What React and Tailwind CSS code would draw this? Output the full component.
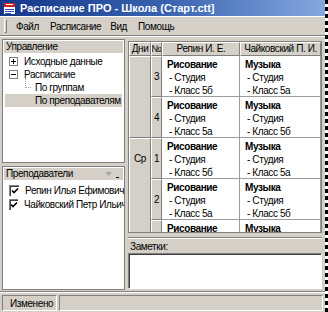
import React from 'react';

const rows = [
  { n: 3, a: 'Класс 5б', b: 'Класс 5а' },
  { n: 4, a: 'Класс 5а', b: 'Класс 5б' },
  { n: 1, a: 'Класс 5б', b: 'Класс 5а' },
  { n: 2, a: 'Класс 5а', b: 'Класс 5б' },
  { n: 3, a: 'Класс 5б', b: 'Класс 5а' },
];

function Lesson({ title, room, cls }) {
  return (
    <div className="pl-[5px] pt-[2px] leading-[13px]">
      <div className="font-bold">{title}</div>
      <div className="pl-[2px]">- {room}</div>
      <div className="pl-[2px]">- {cls}</div>
    </div>
  );
}

function Check() {
  return (
    <div className="w-[11px] h-[11px] bg-white border-t border-l border-[#808080] border-r-white border-b-white shadow-[inset_1px_1px_0_#404040] flex items-center justify-center">
      <svg width="8" height="8" viewBox="0 0 8 8">
        <path d="M1 3.5 L3 5.5 L7 1.5" stroke="#000" strokeWidth="1.6" fill="none" />
      </svg>
    </div>
  );
}

function Box({ plus }) {
  return (
    <div className="w-[9px] h-[9px] bg-white border border-[#808080] flex items-center justify-center relative">
      <div className="w-[5px] h-[1px] bg-black" />
      {plus && <div className="absolute w-[1px] h-[5px] bg-black" />}
    </div>
  );
}

export default function App() {
  return (
    <div className="w-[328px] h-[312px] flex bg-[#d4d0c8] overflow-hidden whitespace-nowrap text-[10px] tracking-[-0.4px] text-black font-['Liberation_Sans',Arial,sans-serif]">
      <div className="w-[325px] flex flex-col">
        {/* Title bar */}
        <div className="h-[16px] flex items-center gap-[4px] pl-[3px] bg-linear-to-r from-[#14368a] via-[#3862ae] to-[#86a8e0]">
          <svg width="13" height="13" viewBox="0 0 13 13">
            <rect x="0.5" y="0.5" width="12" height="12" fill="#fff" stroke="#1c3c8c" />
            <rect x="1" y="1" width="11" height="4" fill="#d02020" />
            <rect x="3" y="2" width="7" height="1" fill="#fff" />
            <rect x="2" y="7" width="9" height="1" fill="#2a50b0" />
            <rect x="2" y="9" width="9" height="1" fill="#2a50b0" />
            <rect x="2" y="11" width="6" height="1" fill="#2a50b0" />
          </svg>
          <span className="text-white font-bold text-[11px] tracking-normal leading-none">Расписание ПРО - Школа (Старт.ctt]</span>
        </div>

        {/* Menu bar */}
        <div className="h-[19px] flex items-center border-t border-white pl-[4px]">
          <div className="w-[3px] h-[14px] border-l border-t border-white border-r border-b border-r-[#808080] border-b-[#808080] mr-[9px]" />
          <span className="mr-[11px]">Файл</span>
          <span className="mr-[9px]">Расписание</span>
          <span className="mr-[11px]">Вид</span>
          <span>Помощь</span>
        </div>
        <div className="h-[2px] border-t border-[#808080] border-b border-b-white" />

        {/* Body */}
        <div className="flex-1 flex min-h-0">
          {/* Left column */}
          <div className="w-[125px] flex flex-col pl-[2px] pt-[2px] pb-[1px] gap-[3px]">
            <div className="flex-1 bg-white border border-[#808080] flex flex-col overflow-hidden">
              <div className="h-[12px] mx-[1px] mt-[1px] bg-[#d4d0c8] leading-[12px] px-[2px]">Управление</div>
              <div className="pt-[2px]">
                <div className="h-[13px] flex items-center pl-[6px] gap-[6px]">
                  <Box plus />
                  <span>Исходные данные</span>
                </div>
                <div className="h-[13px] flex items-center pl-[6px] gap-[6px]">
                  <Box />
                  <span>Расписание</span>
                </div>
                <div className="h-[13px] flex items-center pl-[22px] relative">
                  <div className="absolute left-[22px] top-[-3px] h-[10px] border-l border-dotted border-[#a0a0a0]" />
                  <div className="absolute left-[22px] top-[6px] w-[6px] border-t border-dotted border-[#a0a0a0]" />
                  <span className="pl-[10px]">По группам</span>
                </div>
                <div className="h-[13px] flex items-center mx-[2px] bg-[#d4d0c8] pl-[30px]">
                  <span>По преподавателям</span>
                </div>
              </div>
            </div>
            <div className="flex-1 bg-white border border-[#808080] flex flex-col overflow-hidden">
              <div className="h-[12px] mx-[1px] mt-[1px] bg-[#d4d0c8] leading-[12px] px-[2px] flex items-center">
                <span className="flex-1">Преподаватели</span>
                <svg width="7" height="4" viewBox="0 0 7 4" className="mr-[4px]">
                  <path d="M0 0 H7 L3.5 4 Z" fill="#a8a8a8" />
                </svg>
                <div className="w-[3px] h-[1px] bg-black self-end mb-[2px] mr-[2px]" />
              </div>
              <div className="pt-[3px] pl-[6px]">
                <div className="h-[14px] flex items-center gap-[6px]">
                  <Check />
                  <span>Репин Илья Ефимович</span>
                </div>
                <div className="h-[14px] flex items-center gap-[6px]">
                  <Check />
                  <span>Чайковский Петр Ильич</span>
                </div>
              </div>
            </div>
          </div>

          {/* Splitter */}
          <div className="w-[3px]" />

          {/* Right column */}
          <div className="flex-1 min-w-0 flex flex-col pt-[4px] pr-[3px] pb-[2px]">
            <div className="h-[192px] shrink-0 border border-[#808080] bg-white overflow-hidden flex flex-col">
              <div className="h-[14px] flex bg-[#d4d0c8] shrink-0">
                {[
                  ['Дни', 'w-[22px]'],
                  ['№', 'w-[11px]'],
                  ['Репин И. Е.', 'w-[78px]'],
                  ['Чайковский П. И.', 'flex-1'],
                ].map(([t, w]) => (
                  <div key={t} className={`${w} border-t border-l border-white border-r border-b border-r-[#808080] border-b-[#808080] flex items-center justify-center leading-none overflow-hidden`}>
                    {t}
                  </div>
                ))}
              </div>
              <div className="flex flex-1 min-h-0 overflow-hidden">
                <div className="w-[22px] flex flex-col bg-[#d4d0c8]">
                  <div className="h-[82px] shrink-0 border-t border-l border-white border-r border-b border-r-[#808080] border-b-[#808080]" />
                  <div className="flex-1 border-t border-l border-white border-r border-r-[#808080] flex justify-center pt-[12px]">Ср</div>
                </div>
                <div className="flex-1 flex flex-col">
                  {rows.map((r, i) => (
                    <div key={i} className="h-[41px] shrink-0 flex">
                      <div className="w-[11px] bg-[#d4d0c8] border-t border-l border-white border-r border-b border-r-[#808080] border-b-[#808080] flex items-center justify-center">
                        {r.n}
                      </div>
                      <div className="w-[78px] border-r border-b border-[#9c9c9c]">
                        <Lesson title="Рисование" room="Студия" cls={r.a} />
                      </div>
                      <div className="flex-1 border-r border-b border-[#9c9c9c]">
                        <Lesson title="Музыка" room="Студия" cls={r.b} />
                      </div>
                    </div>
                  ))}
                </div>
              </div>
            </div>
            <div className="h-[5px] shrink-0 border-b border-[#808080] shadow-[0_1px_0_#fff]" />
            <div className="h-[14px] shrink-0 leading-[14px] pl-[2px] pt-[2px]">Заметки:</div>
            <div className="flex-1 mt-[1px] bg-white border-t border-l border-[#808080] border-r border-b border-r-white border-b-white shadow-[inset_1px_1px_0_#404040]" />
          </div>
        </div>

        {/* Status bar */}
        <div className="h-[21px] border-t border-[#808080] shadow-[inset_0_1px_0_#fff] flex items-center gap-[2px] px-[2px] pt-[2px]">
          <div className="w-[55px] h-[16px] border-t border-l border-[#808080] border-r border-b border-r-white border-b-white flex items-center pl-[7px]">Изменено</div>
          <div className="flex-1 h-[16px] border-t border-l border-[#808080] border-r border-b border-r-white border-b-white" />
        </div>
      </div>
      <div className="w-[3px] bg-white bg-[repeating-linear-gradient(to_bottom,#000_0px,#000_4px,transparent_4px,transparent_7px)]" />
    </div>
  );
}
